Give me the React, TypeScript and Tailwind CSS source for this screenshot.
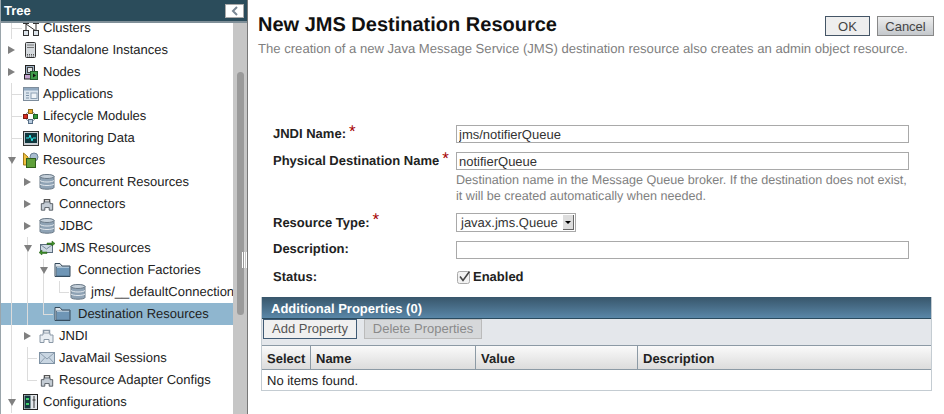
import type { ReactNode } from "react";

const Db = () => (
  <svg width="16" height="18" viewBox="0 0 16 18">
    <path d="M1 3.5C1 1.5 15 1.5 15 3.5V14.5C15 16.8 1 16.8 1 14.5Z" fill="#8fa3b5" stroke="#6b7a88" />
    <ellipse cx="8" cy="3.5" rx="7" ry="2" fill="#c5d0da" stroke="#6b7a88" />
    <path d="M1 7.5C3 9.5 13 9.5 15 7.5M1 11C3 13 13 13 15 11" fill="none" stroke="#e3e8ed" />
  </svg>
);

const Connector = ({ light }: { light?: boolean }) => (
  <svg width={light ? 17 : 14} height={light ? 16 : 15} viewBox="0 0 16 16">
    <path d="M5 5V2.5H11V5" fill="none" stroke={light ? "#8a98a6" : "#555"} strokeWidth="1.5" />
    <path d="M1.5 14.5V7H4.5V5H11.5V7H14.5V14.5H10.5V11.5H5.5V14.5Z" fill={light ? "#e8edf2" : "#c4ccd4"} stroke={light ? "#8a98a6" : "#4a5158"} />
  </svg>
);

const Folder = () => (
  <svg width="17" height="16" viewBox="0 0 17 16">
    <path d="M1 14V1.5H6L8 4H16V14.5H1Z" fill="#dde4ea" stroke="#34495a" />
    <rect x="2.5" y="5" width="13" height="9" fill="#6f96b6" stroke="#3e5a72" strokeWidth="0.6" />
    <path d="M3 5.5H15" stroke="#a9c2d6" />
  </svg>
);

const Mail = () => (
  <svg width="16" height="12" viewBox="0 0 16 12">
    <rect x="0.5" y="0.5" width="15" height="11" fill="#c9d6e2" stroke="#7f92a4" />
    <path d="M1 1L8 7L15 1M1 11L6 5.5M15 11L10 5.5" fill="none" stroke="#8c9dae" />
  </svg>
);

const icons: Record<string, ReactNode> = {
  clusters: (
    <svg width="16" height="16" viewBox="0 0 16 16">
      <path d="M5 1H11M3 4V11M3 4L13 11M13 4V11" fill="none" stroke="#333" />
      <rect x="0.5" y="-1.5" width="5" height="5" fill="#7fa3c4" stroke="#333" />
      <rect x="10.5" y="-1.5" width="5" height="5" fill="#dde4ea" stroke="#333" />
      <rect x="0.5" y="10.5" width="5" height="5" fill="#dde4ea" stroke="#333" />
      <rect x="10.5" y="10.5" width="5" height="5" fill="#dde4ea" stroke="#333" />
    </svg>
  ),
  server: (
    <svg width="11" height="16" viewBox="0 0 11 16">
      <rect x="0.5" y="0.5" width="10" height="15" rx="1" fill="#d5d9dd" stroke="#333" />
      <path d="M2 3H9M2 5.5H9" stroke="#777" />
      <path d="M2 12.5H9M2 14H9" stroke="#555" strokeDasharray="1 1" />
    </svg>
  ),
  nodes: (
    <svg width="14" height="15" viewBox="0 0 14 15">
      <rect x="1.5" y="0.5" width="9" height="9" fill="#9fb2c4" stroke="#222" />
      <rect x="3.5" y="2.5" width="5" height="5" fill="#dfe5ea" stroke="#444" />
      <rect x="0.5" y="9.5" width="9" height="4.5" fill="#c5a5cf" stroke="#222" />
      <rect x="6.5" y="6.5" width="7" height="8" fill="#3f9a4a" stroke="#1e5a27" />
      <path d="M9 8.5L12 10.5L9 12.5Z" fill="#111" />
    </svg>
  ),
  apps: (
    <svg width="16" height="14" viewBox="0 0 16 14">
      <rect x="0.5" y="0.5" width="15" height="13" fill="#dbe5ee" stroke="#7e8d9c" />
      <rect x="1" y="1" width="14" height="2.5" fill="#90a8bf" />
      <path d="M3 6H6M3 8.5H6M3 11H6" stroke="#7e93a8" />
      <rect x="8" y="6" width="6" height="5.5" fill="#eef3f7" stroke="#8ea2b5" />
    </svg>
  ),
  lifecycle: (
    <svg width="15" height="15" viewBox="0 0 15 15">
      <circle cx="7.5" cy="7.5" r="5" fill="none" stroke="#8a97a3" />
      <rect x="5.5" y="0.5" width="4" height="4" fill="#e8a828" stroke="#8a6a1a" />
      <rect x="0.5" y="5.5" width="4" height="4" fill="#d62b20" stroke="#7c1c15" />
      <rect x="10.5" y="5.5" width="4" height="4" fill="#2e9a3c" stroke="#1c5e25" />
      <rect x="5.5" y="10.5" width="4" height="4" fill="#b7cbe0" stroke="#566e86" />
    </svg>
  ),
  monitor: (
    <svg width="16" height="15" viewBox="0 0 16 15">
      <rect x="0.5" y="0.5" width="15" height="14" fill="#c9ced3" stroke="#333" />
      <rect x="2" y="2" width="12" height="10" fill="#10383f" />
      <path d="M3 7H6L7 4L9 10L10 7H13" fill="none" stroke="#2ee6e6" />
    </svg>
  ),
  resources: (
    <svg width="16" height="16" viewBox="0 0 16 16">
      <path d="M0.5 1V13H5V5Z" fill="#f0c040" stroke="#a07a18" />
      <circle cx="11" cy="5" r="4" fill="#a9bdd0" stroke="#6a8096" />
      <rect x="3.5" y="6.5" width="9" height="9" fill="#5fa03a" stroke="#2f5e1a" />
    </svg>
  ),
  jms: (
    <svg width="16" height="16" viewBox="0 0 16 16">
      <rect x="1.5" y="4.5" width="12" height="8" fill="#cdd8e3" stroke="#5c6d7e" />
      <path d="M2 5L7.5 9L13 5" fill="none" stroke="#7a8c9e" />
      <path d="M8 3H13V1L16 3.5L13 6V4.5H8Z" fill="#3f8f2a" stroke="#235a14" strokeWidth="0.5" />
      <path d="M8 12H3V10L0 12.5L3 15V13.5H8Z" fill="#3f8f2a" stroke="#235a14" strokeWidth="0.5" />
    </svg>
  ),
  config: (
    <svg width="15" height="16" viewBox="0 0 15 16">
      <rect x="0.5" y="0.5" width="14" height="15" fill="#e4e8ec" stroke="#222" />
      <rect x="1.5" y="1.5" width="6" height="13" fill="#14383f" />
      <rect x="3" y="4" width="3" height="2" fill="#3fd06a" />
      <rect x="3" y="9" width="3" height="2" fill="#3fd06a" />
      <path d="M11 2V14M9.5 6H12.5" stroke="#333" />
    </svg>
  ),
};

type Row = {
  label: string;
  level: 0 | 1 | 2 | 3;
  icon: ReactNode;
  arrow?: "right" | "down";
  selected?: boolean;
  lines: number[];
  last?: number;
  stub?: number;
};

const rows: Row[] = [
  { label: "Clusters", level: 0, icon: icons.clusters, lines: [11], stub: 11 },
  { label: "Standalone Instances", level: 0, icon: icons.server, arrow: "right", lines: [] },
  { label: "Nodes", level: 0, icon: icons.nodes, arrow: "right", lines: [] },
  { label: "Applications", level: 0, icon: icons.apps, lines: [11], stub: 11 },
  { label: "Lifecycle Modules", level: 0, icon: icons.lifecycle, lines: [11], stub: 11 },
  { label: "Monitoring Data", level: 0, icon: icons.monitor, lines: [11], stub: 11 },
  { label: "Resources", level: 0, icon: icons.resources, arrow: "down", lines: [11] },
  { label: "Concurrent Resources", level: 1, icon: <Db />, arrow: "right", lines: [11] },
  { label: "Connectors", level: 1, icon: <Connector />, arrow: "right", lines: [11] },
  { label: "JDBC", level: 1, icon: <Db />, arrow: "right", lines: [11] },
  { label: "JMS Resources", level: 1, icon: icons.jms, arrow: "down", lines: [11, 27] },
  { label: "Connection Factories", level: 2, icon: <Folder />, arrow: "down", lines: [11, 27, 43] },
  { label: "jms/__defaultConnectionFactory", level: 3, icon: <Db />, lines: [11, 27, 43], last: 59, stub: 59 },
  { label: "Destination Resources", level: 2, icon: <Folder />, selected: true, lines: [11, 27], last: 43, stub: 43 },
  { label: "JNDI", level: 1, icon: <Connector light />, arrow: "right", lines: [11] },
  { label: "JavaMail Sessions", level: 1, icon: <Mail />, lines: [11, 27], stub: 27 },
  { label: "Resource Adapter Configs", level: 1, icon: <Connector />, lines: [11], last: 27, stub: 27 },
  { label: "Configurations", level: 0, icon: icons.config, arrow: "down", lines: [11] },
];

const indent = ["pl-[7px]", "pl-[23px]", "pl-[39px]", "pl-[54px]"];
const labelGap = ["ml-[3px]", "ml-[3px]", "ml-[6px]", "ml-[4px]"];

const lineAt: Record<number, string> = {
  11: "left-[10px]",
  27: "left-[26px]",
  43: "left-[42px]",
  59: "left-[58px]",
};

const stubAt: Record<number, string> = {
  11: "left-[10px] w-[11px]",
  27: "left-[26px] w-[10px]",
  43: "left-[42px] w-[10px]",
  59: "left-[58px] w-[10px]",
};

function TreeRow({ row }: { row: Row }) {
  return (
    <div className={`relative flex h-[22px] items-center ${indent[row.level]} ${row.selected ? "bg-[#8fb6cf]" : ""}`}>
      {row.lines.map((x) => (
        <div key={x} className={`absolute inset-y-0 w-px bg-[#dcdcdc] ${lineAt[x]}`} />
      ))}
      {row.last !== undefined && <div className={`absolute top-0 h-[11px] w-px bg-[#dcdcdc] ${lineAt[row.last]}`} />}
      {row.stub !== undefined && <div className={`absolute top-[11px] h-px bg-[#dcdcdc] ${stubAt[row.stub]}`} />}
      <div className="relative flex w-[13px] shrink-0 justify-start">
        {row.arrow === "right" && <div className="h-0 w-0 border-y-[4px] border-l-[7px] border-y-transparent border-l-[#808080]" />}
        {row.arrow === "down" && <div className="h-0 w-0 border-x-[4px] border-t-[7px] border-x-transparent border-t-[#808080]" />}
      </div>
      <div className="relative flex w-[19px] shrink-0 justify-center">{row.icon}</div>
      <span className={`relative whitespace-nowrap text-[13px] text-[#222] ${labelGap[row.level]}`}>{row.label}</span>
    </div>
  );
}

function FormRow({ label, star, children, h, mt }: { label: string; star?: boolean; children: ReactNode; h: string; mt: string }) {
  return (
    <div className={`flex ${mt}`}>
      <div className={`flex w-[183px] shrink-0 items-center ${h}`}>
        <span className="text-[13px] font-bold text-[#222]">{label}</span>
        {star && <span className="ml-[3px] -mt-[9px] h-[14px] text-[17px] leading-[18px] text-[#a50000]">*</span>}
      </div>
      <div className="w-[453px]">{children}</div>
    </div>
  );
}

const inputClass = "block h-[18px] w-full border border-[#a9a9a9] bg-white px-[2px] text-[13px] leading-none text-[#333] outline-none";

export default function App() {
  return (
    <div className="flex h-[414px] w-[944px] overflow-hidden bg-white font-['Liberation_Sans',Arial,sans-serif] [text-rendering:geometricPrecision]">
      {/* tree */}
      <div className="relative flex w-[248px] shrink-0 flex-col border-x border-l-[#9aa5ab] border-r-[#777]">
        <div className="z-10 flex h-[23px] shrink-0 items-center justify-between border-b-2 border-[#7f8f98] bg-[#2b4c5b] pl-[3px] pr-[3px]">
          <span className="text-[13px] font-bold text-white">Tree</span>
          <div className="flex h-[14px] w-[19px] items-center justify-center border border-[#aaa] bg-white">
            <svg width="8" height="10" viewBox="0 0 8 10">
              <path d="M6 1L2 5L6 9" fill="none" stroke="#7a8794" strokeWidth="2" />
            </svg>
          </div>
        </div>
        <div className="flex min-h-0 flex-1">
          <div className="min-w-0 flex-1 overflow-hidden">
            <div className="-mt-[6px]">
              {rows.map((row) => (
                <TreeRow key={row.label} row={row} />
              ))}
            </div>
          </div>
          <div className="flex w-[14px] shrink-0 justify-center bg-[#c6c6c6] pt-[49px]">
            <div className="h-[243px] w-[7px] rounded-full bg-[#9a9a9a]" />
          </div>
        </div>
        {/* splitter grip */}
        <div className="absolute left-[241px] top-[252px] h-[16px] w-[5px] border-x border-white">
          <div className="mx-auto h-full w-px bg-white" />
        </div>
      </div>

      {/* content */}
      <div className="min-w-0 flex-1">
        <div className="flex items-start justify-between pl-[10px] pr-[10px]">
          <h1 className="mt-[13px] text-[20px] font-bold leading-[24px] text-[#111]">New JMS Destination Resource</h1>
          <div className="mt-[16px] flex gap-[7px]">
            <button className="h-[20px] w-[45px] border border-[#456] bg-[#eeeeee] text-[13px] leading-none text-[#444]">OK</button>
            <button className="h-[20px] w-[57px] border border-[#888] bg-gradient-to-b from-[#eee] to-[#c4c8cc] text-[13px] leading-none text-[#444]">Cancel</button>
          </div>
        </div>
        <p className="mt-[4px] pl-[10px] text-[13.1px] leading-[16px] text-[#808080]">
          The creation of a new Java Message Service (JMS) destination resource also creates an admin object resource.
        </p>

        <div className="ml-[25px] mt-[68px]">
          <FormRow label="JNDI Name:" star h="h-[18px]" mt="">
            <input className={inputClass} readOnly value="jms/notifierQueue" />
          </FormRow>
          <FormRow label="Physical Destination Name" star h="h-[18px]" mt="mt-[9px]">
            <input className={inputClass} readOnly value="notifierQueue" />
            <p className="mt-[2px] text-[12.6px] leading-[16px] text-[#808080]">
              Destination name in the Message Queue broker. If the destination does not exist, it will be created automatically when needed.
            </p>
          </FormRow>
          <FormRow label="Resource Type:" star h="h-[19px]" mt="mt-[9px]">
            <div className="flex h-[19px] w-[120px] items-center justify-between border border-[#a9a9a9] bg-white pl-[4px] pr-[1px]">
              <span className="text-[13px] text-[#333]">javax.jms.Queue</span>
              <div className="flex h-[15px] w-[11px] items-center justify-center border-r border-b border-[#666] bg-[#ddd]">
                <div className="h-0 w-0 border-x-[3px] border-t-[3px] border-x-transparent border-t-black" />
              </div>
            </div>
          </FormRow>
          <FormRow label="Description:" h="h-[16px]" mt="mt-[9px]">
            <input className={inputClass} readOnly value="" />
          </FormRow>
          <FormRow label="Status:" h="h-[18px]" mt="mt-[9px]">
            <div className="flex h-[18px] items-center pl-[1px]">
              <svg width="14" height="14" viewBox="0 0 14 14">
                <rect x="0.5" y="1.5" width="12" height="12" rx="2" fill="#f2f2f2" stroke="#aaa" />
                <path d="M3 6.5L6 10.5L12.5 1.5" fill="none" stroke="#444" strokeWidth="1.6" />
              </svg>
              <span className="ml-[2px] text-[13px] font-bold text-[#222]">Enabled</span>
            </div>
          </FormRow>
        </div>

        {/* table */}
        <div className="ml-[13px] mr-[12px] mt-[11px] border-x border-b border-[#c4ccd2]">
          <div className="flex h-[22px] items-center border-b border-[#2a4a5e] bg-gradient-to-b from-[#38566b] to-[#5a87a8] pl-[9px] pt-[2px] text-[13px] font-bold text-white">
            Additional Properties (0)
          </div>
          <div className="flex h-[27px] gap-[7px] border-b border-[#8c9aa5] bg-[#e4e7eb] pl-[1px]">
            <button className="h-[20px] w-[94px] border border-[#3f5a74] bg-[#f0f0f0] pb-[1px] text-[13px] leading-none text-[#555]">Add Property</button>
            <button className="h-[20px] w-[118px] border border-[#bbb] bg-[#d6d8da] pb-[1px] text-[13px] leading-none text-[#8a8a8a]">Delete Properties</button>
          </div>
          <div className="flex h-[24px] border-b border-[#8c9aa5] bg-gradient-to-b from-[#fafafa] to-[#dcdcdc] text-[13px] font-bold text-[#222]">
            <div className="flex w-[49px] items-center border-r border-[#8c9aa5] pl-[5px] pt-[2px]">Select</div>
            <div className="flex w-[165px] items-center border-r border-[#8c9aa5] pl-[5px] pt-[2px]">Name</div>
            <div className="flex w-[162px] items-center border-r border-[#8c9aa5] pl-[5px] pt-[2px]">Value</div>
            <div className="flex flex-1 items-center pl-[5px] pt-[2px]">Description</div>
          </div>
          <div className="flex h-[20px] items-center pl-[5px] pt-[2px] text-[13px] text-[#222]">No items found.</div>
        </div>
      </div>
    </div>
  );
}
